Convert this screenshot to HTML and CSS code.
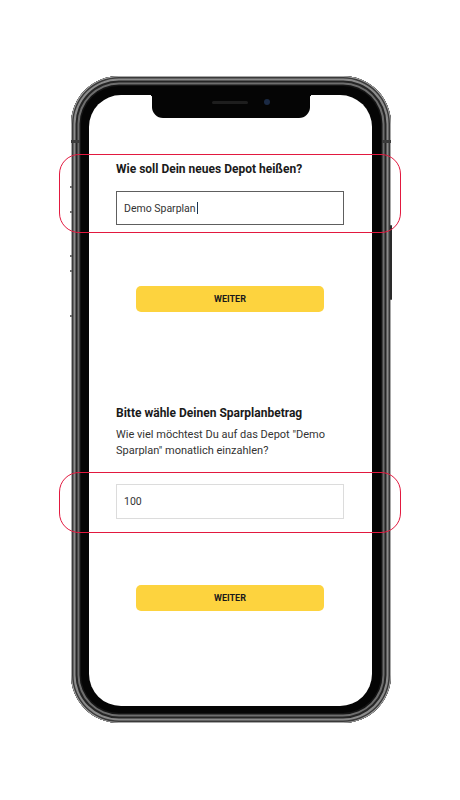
FILE: index.html
```html
<!DOCTYPE html>
<html lang="de">
<head>
<meta charset="utf-8">
<title>Depot</title>
<link rel="stylesheet" href="styles.css">
</head>
<body>
<div class="page">
  <div class="phone">
    <span class="tick t1"></span>
    <span class="tick t2"></span>
    <span class="tick t3"></span>
    <span class="tick t4"></span>
    <span class="tick t5"></span>
    <span class="band bl"></span>
    <span class="band br"></span>
    <span class="side-btn"></span>
    <div class="screen">
      <div class="notch"><span class="speaker"></span><span class="cam"></span></div>
      <div class="content">
        <h2 class="q">Wie soll Dein neues Depot heißen?</h2>
        <div class="field field-active">Demo Sparplan<span class="caret"></span></div>
        <button class="next">WEITER</button>
        <h2 class="q q2">Bitte wähle Deinen Sparplanbetrag</h2>
        <p class="desc">Wie viel möchtest Du auf das Depot "Demo Sparplan" monatlich einzahlen?</p>
        <div class="field field-idle">100</div>
        <button class="next next2">WEITER</button>
      </div>
    </div>
  </div>
  <div class="hl hl1"></div>
  <div class="hl hl2"></div>
</div>
</body>
</html>
```

FILE: styles.css
```css
html, body {
  margin: 0;
  padding: 0;
  background: #ffffff;
}

.page {
  position: relative;
  width: 460px;
  height: 800px;
  overflow: hidden;
  font-family: Roboto, "Liberation Sans", sans-serif;
}

.phone {
  position: relative;
  box-sizing: border-box;
  width: 320px;
  height: 647px;
  margin: 76px 0 0 71px;
  padding: 19px 19px 17px 18px;
  border-radius: 48px;
  background: #050505;
  box-shadow:
    inset 0 0 0 1px #a8a8a8,
    inset 0 0 0 2.5px #3a3a3a,
    inset 0 0 0 4.5px #8c8c8c,
    inset 0 0 0 6.5px #262626,
    inset 0 0 0 8.5px #6e6e6e,
    inset 0 0 0 10px #151515;
}

.tick {
  position: absolute;
  left: -1px;
  width: 2px;
  height: 2px;
  background: #6a6a6a;
}
.t1 { top: 110px; }
.t2 { top: 135px; }
.t3 { top: 179px; }
.t4 { top: 194px; }
.t5 { top: 239px; }

.band {
  position: absolute;
  top: 64px;
  width: 9px;
  height: 3px;
  background: #3c3c3c;
}
.bl { left: 0; }
.br { right: 0; }

.side-btn {
  position: absolute;
  right: -1px;
  top: 149px;
  width: 2px;
  height: 75px;
  background: #2a2a2a;
  border-radius: 1px;
}

.screen {
  position: relative;
  height: 100%;
  background: #ffffff;
  border-radius: 32px;
  overflow: hidden;
}

.notch {
  position: absolute;
  left: 63px;
  top: -2px;
  width: 158px;
  height: 25px;
  background: #050505;
  border-radius: 0 0 11px 11px;
}
.notch::before,
.notch::after {
  content: "";
  position: absolute;
  top: 0;
  width: 6px;
  height: 6px;
}
.notch::before {
  left: -6px;
  background: radial-gradient(circle at 0 100%, transparent 6px, #050505 6.5px);
}
.notch::after {
  right: -6px;
  background: radial-gradient(circle at 100% 100%, transparent 6px, #050505 6.5px);
}
.speaker {
  position: absolute;
  left: 60px;
  top: 8px;
  width: 36px;
  height: 3px;
  border-radius: 2px;
  background: #1e1e1e;
}
.cam {
  position: absolute;
  left: 112px;
  top: 6px;
  width: 6px;
  height: 6px;
  border-radius: 50%;
  background: #1b2a44;
}

.content {
  display: flex;
  flex-direction: column;
  padding: 66px 28px 0 27px;
}

.q {
  margin: 0;
  font-size: 12px;
  line-height: 16px;
  font-weight: 700;
  color: #1a1a1a;
}
.q2 {
  margin-top: 93px;
}

.field {
  box-sizing: border-box;
  display: flex;
  align-items: center;
  padding: 0 7px;
  font-size: 10.5px;
  color: #333;
  background: #fff;
}
.field-active {
  height: 34px;
  margin-top: 14px;
  border: 1.5px solid #5e5e5e;
}
.field-idle {
  height: 35px;
  margin-top: 25px;
  border: 1px solid #dcdcdc;
}
.caret {
  display: inline-block;
  width: 1.3px;
  height: 12px;
  margin-left: 1px;
  background: #1d3550;
}

.next {
  align-self: center;
  width: 188px;
  height: 26px;
  margin-top: 61px;
  padding: 0;
  border: none;
  border-radius: 5px;
  background: #fdd33e;
  font-family: Roboto, "Liberation Sans", sans-serif;
  font-size: 9px;
  font-weight: 700;
  color: #1a1a1a;
}
.next2 {
  margin-top: 66px;
}

.desc {
  margin: 6px 0 0;
  font-size: 11px;
  line-height: 16px;
  color: #333;
}

.hl {
  position: absolute;
  left: 59px;
  width: 342px;
  box-sizing: border-box;
  border: 1.5px solid #e2193f;
  border-radius: 20px;
}
.hl1 {
  top: 154px;
  height: 79px;
}
.hl2 {
  top: 472px;
  height: 61px;
}
```
